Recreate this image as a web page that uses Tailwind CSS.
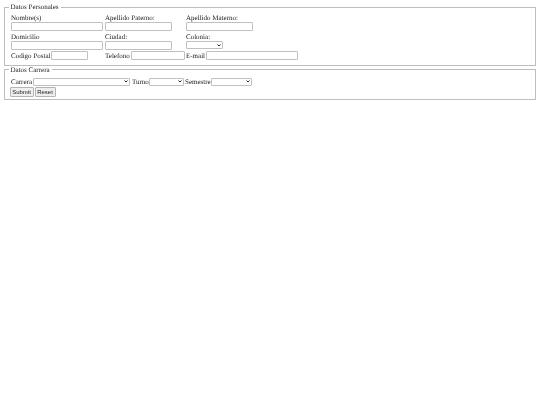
<!doctype html>
<html lang="en">
  <head>
    <meta charset="UTF-8" />
    <title>Datos</title>
    <script src="https://cdn.jsdelivr.net/npm/@tailwindcss/browser@4"></script>
  </head>
  <body class="bg-white font-['Liberation_Serif',serif] text-[7px] leading-[8px] text-[#222] [text-rendering:geometricPrecision]">
    <div class="flex flex-col px-1 pt-[3px] will-change-transform">
      <!-- datos personales -->
      <fieldset class="h-[62.5px] border border-[#bdbdbd] pl-[3.5px]">
        <legend class="px-[2px]">Datos Personales</legend>
        <div class="ml-[2.5px] grid grid-cols-[94px_81px_1fr] pt-px whitespace-nowrap">
          <div class="flex h-[19px] w-[92px] flex-col justify-end">
            <label>Nombre(s)</label>
            <input class="h-[9px] w-full rounded-[1px] border border-[#c0c0c0] bg-white" />
          </div>
          <div class="flex h-[19px] flex-col justify-end">
            <label>Apellido Paterno:</label>
            <input class="h-[9px] w-[67px] rounded-[1px] border border-[#c0c0c0] bg-white" />
          </div>
          <div class="flex h-[19px] flex-col justify-end">
            <label>Apellido Materno:</label>
            <input class="h-[9px] w-[67px] rounded-[1px] border border-[#c0c0c0] bg-white" />
          </div>
          <div class="flex h-[19px] w-[92px] flex-col justify-end">
            <label>Domicilio</label>
            <input class="h-[9px] w-full rounded-[1px] border border-[#c0c0c0] bg-white" />
          </div>
          <div class="flex h-[19px] flex-col justify-end">
            <label>Ciudad:</label>
            <input class="h-[9px] w-[67px] rounded-[1px] border border-[#c0c0c0] bg-white" />
          </div>
          <div class="flex h-[19px] flex-col justify-end pb-px">
            <label>Colonia:</label>
            <div class="relative h-[8px] w-[37px]">
              <select class="size-full appearance-none rounded-[1px] border border-[#c0c0c0] bg-white"></select>
              <svg class="absolute top-[2.5px] right-[2.5px] h-[3px] w-[4px]" viewBox="0 0 8 6" fill="none"><path d="M1 1l3 3 3-3" stroke="#222" stroke-width="2" /></svg>
            </div>
          </div>
          <div class="mt-px flex h-[9px] items-center">
            <label class="w-[40px]">Codigo Postal</label>
            <input class="h-[9px] w-[37px] rounded-[1px] border border-[#c0c0c0] bg-white" />
          </div>
          <div class="col-span-2 mt-px flex h-[9px] items-center">
            <label class="w-[26px]">Telefono</label>
            <input class="h-[9px] w-[54px] rounded-[1px] border border-[#c0c0c0] bg-white" />
            <label class="ml-px w-[20px]">E-mail</label>
            <input class="h-[9px] w-[92px] rounded-[1px] border border-[#c0c0c0] bg-white" />
          </div>
        </div>
      </fieldset>
      <!-- datos carrera -->
      <fieldset class="h-[34px] border border-[#bdbdbd] pl-[3.5px]">
        <legend class="px-[2px]">Datos Carrera</legend>
        <div class="mt-[4px] ml-[2.5px] flex h-[8px] items-center whitespace-nowrap">
          <label class="w-[22px]">Carrera</label>
          <div class="relative h-[8px] w-[97px]">
            <select class="size-full appearance-none rounded-[1px] border border-[#c0c0c0] bg-white"></select>
            <svg class="absolute top-[2.5px] right-[2.5px] h-[3px] w-[4px]" viewBox="0 0 8 6" fill="none"><path d="M1 1l3 3 3-3" stroke="#222" stroke-width="2" /></svg>
          </div>
          <label class="ml-[2px] w-[17px]">Turno</label>
          <div class="relative h-[8px] w-[35px]">
            <select class="size-full appearance-none rounded-[1px] border border-[#c0c0c0] bg-white"></select>
            <svg class="absolute top-[2.5px] right-[2.5px] h-[3px] w-[4px]" viewBox="0 0 8 6" fill="none"><path d="M1 1l3 3 3-3" stroke="#222" stroke-width="2" /></svg>
          </div>
          <label class="ml-px w-[26px]">Semestre</label>
          <div class="relative h-[8px] w-[41px]">
            <select class="size-full appearance-none rounded-[1px] border border-[#c0c0c0] bg-white"></select>
            <svg class="absolute top-[2.5px] right-[2.5px] h-[3px] w-[4px]" viewBox="0 0 8 6" fill="none"><path d="M1 1l3 3 3-3" stroke="#222" stroke-width="2" /></svg>
          </div>
        </div>
        <div class="mt-px ml-[1px] flex gap-px font-['Liberation_Sans',sans-serif] text-[6px]">
          <button class="h-[10px] w-[24px] rounded-[1px] border border-[#b4b4b4] bg-[#efefef]">Submit</button>
          <button class="h-[10px] w-[21px] rounded-[1px] border border-[#b4b4b4] bg-[#efefef]">Reset</button>
        </div>
      </fieldset>
    </div>
  </body>
</html>
